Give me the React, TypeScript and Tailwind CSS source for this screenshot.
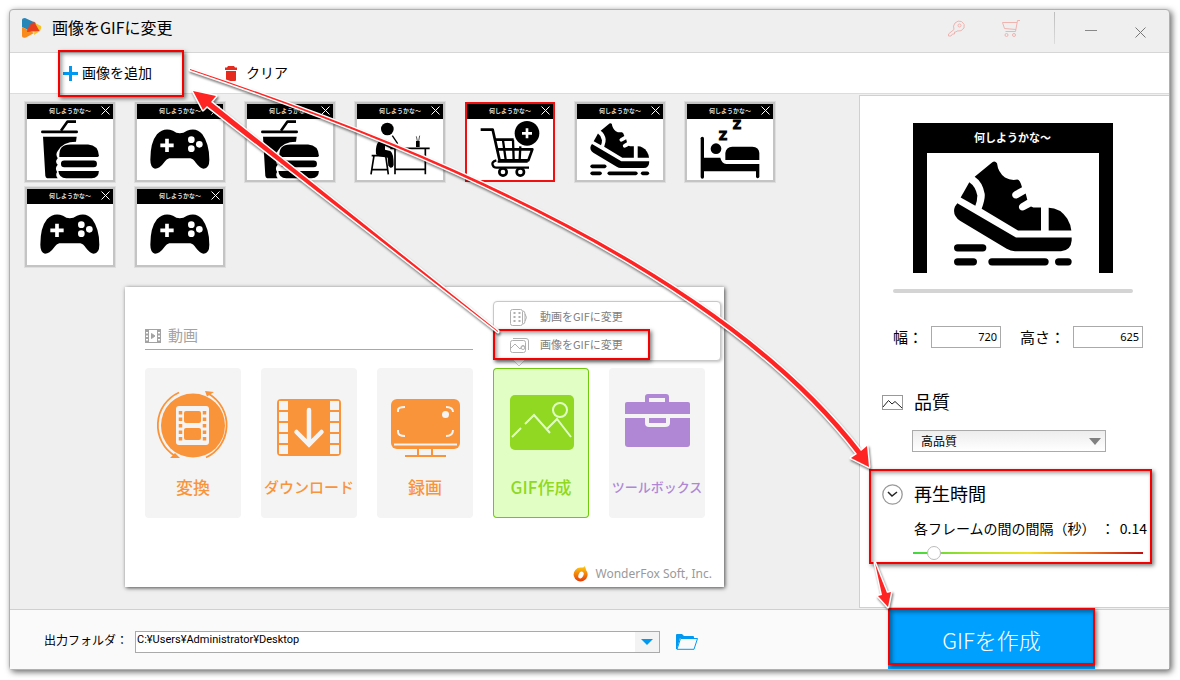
import { useState, type ReactNode } from 'react';

type ThumbKind = 'meal' | 'game' | 'desk' | 'cart' | 'shoe' | 'bed';

const thumbs: ThumbKind[] = ['meal', 'game', 'meal', 'desk', 'cart', 'shoe', 'bed', 'game', 'game'];

function ShoeShape() {
  return (
    <>
      <path d="M344 199 L397 155 Q405 150 411 158 Q414 185 435 201 Q452 211 472 207 Q480 208 486 230 L463 243 Q452 250 459 260 Q465 267 475 262 L497 249 L502 268 L482 280 Q473 288 479 296 Q486 303 496 297 L513 288 L520 291 H543 V360 H474 L365 295 Q376 265 374 250 Q368 215 344 199Z" />
      <path d="M328 215 Q347 228 352 255 Q352 270 346 286 L302 261Z" />
      <path d="M566 292 Q600 292 622 325 Q632 342 634 360 H566Z" />
      <path d="M292 278 L468 381 H635 V390 Q633 420 603 422 H465 Q452 422 440 415 L300 331 Q275 312 285 288Z" />
      <rect x="282" y="401" width="97" height="22" rx="11" />
      <rect x="282" y="443" width="69" height="22" rx="11" />
      <rect x="385" y="443" width="181" height="22" rx="11" />
      <rect x="585" y="443" width="50" height="22" rx="11" />
    </>
  );
}

function ThumbArt({ kind }: { kind: ThumbKind }) {
  return (
    <svg viewBox="0 0 258 183" className="block w-full overflow-visible" aria-hidden="true">
      {kind === 'meal' && (
        <g transform="translate(2 0) scale(0.98)">
          <path d="M148 8 H122 L102 36" fill="none" stroke="#000" strokeWidth="8" strokeLinejoin="round" />
          <rect x="41" y="35" width="113" height="9" rx="4" />
          <path d="M47 54 H150 L148 70 Q108 70 92 98 Q84 108 92 120 Q82 130 92 140 Q82 150 90 162 Q84 172 92 181 H60 Q55 181 54 174Z" />
          <path d="M97 116 Q94 78 130 78 H185 Q216 80 218 112 Q218 116 214 116Z" />
          <rect x="102" y="127" width="110" height="21" rx="10" />
          <path d="M94 159 H218 Q218 181 196 181 H118 Q96 181 94 159Z" />
        </g>
      )}
      {kind === 'game' && (
        <>
          <path d="M40 122 Q40 70 60 46 Q80 24 108 35 Q128 50 150 35 Q178 24 196 46 Q217 75 217 122 Q217 148 200 149 Q190 149 177 132 Q168 119 160 118 H97 Q90 119 80 132 Q68 149 54 149 Q40 146 40 122Z" />
          <path d="M90 59 V99 M70 79 H110" stroke="#fff" strokeWidth="11" />
          <circle cx="163" cy="62" r="10" fill="#fff" />
          <circle cx="187" cy="76" r="10" fill="#fff" />
          <circle cx="163" cy="89" r="10" fill="#fff" />
        </>
      )}
      {kind === 'desk' && (
        <>
          <circle cx="91" cy="30" r="19" />
          <path d="M57 106 Q54 66 76 62 Q92 60 112 76 L132 82 V88 H100 L84 80 L84 92 L100 96 Q110 102 110 138 Q108 148 100 146 L94 140 L92 116 L66 112Z" />
          <g fill="none" stroke="#000" strokeWidth="5">
            <path d="M44 110 H96 M51 110 L42 166 M86 110 L94 166 M46 152 H92" />
            <path d="M100 88 H218 M114 88 V166 M205 88 V166 M114 151 H205" />
            <path d="M106 50 L122 74" strokeWidth="4" />
            <path d="M181 66 L178 52 M185 66 L188 50" strokeWidth="2" />
          </g>
          <rect x="177" y="66" width="11" height="18" />
        </>
      )}
      {kind === 'cart' && (
        <>
          <g fill="none" stroke="#000" strokeWidth="8" strokeLinejoin="round">
            <path d="M41 32 H77 L98 125 M83 62 H140 M89 91 H196 L184 124 H97" />
            <path d="M108 64 L116 122 M138 62 L140 122 M160 82 L158 122 M88 124 Q72 128 78 140 Q80 146 88 146 H186 M92 128 H182" strokeWidth="7" />
            <circle cx="108" cy="159" r="11" />
            <circle cx="160" cy="159" r="11" />
          </g>
          <circle cx="180" cy="43" r="37" />
          <path d="M180 28 V58 M165 43 H195" stroke="#fff" strokeWidth="8" />
        </>
      )}
      {kind === 'shoe' && (
        <g transform="translate(-101 -64) scale(0.5)">
          <ShoeShape />
        </g>
      )}
      {kind === 'bed' && (
        <>
          <rect x="41" y="53" width="10" height="126" rx="5" />
          <path d="M50 116 H100 Q104 134 118 135 H217 V174 Q212 182 207 174 V157 H50Z" />
          <circle cx="87" cy="89" r="16" />
          <path d="M115 123 V102 Q117 84 136 83 H196 Q216 84 217 102 V123Z" />
          <g className="font-['DejaVu_Sans'] font-bold" fontSize="35" stroke="#000" strokeWidth="3">
            <text x="95" y="62">Z</text>
            <text x="137" y="31">Z</text>
          </g>
        </>
      )}
    </svg>
  );
}

function Thumb({ kind, selected, onSelect }: { kind: ThumbKind; selected: boolean; onSelect: () => void }) {
  return (
    <li
      className={
        selected
          ? 'relative w-[90px] border-2 border-[#f01010] bg-white'
          : 'relative w-[90px] border-2 border-[#c4c4c4] bg-white outline outline-[#dedede]'
      }
    >
      <button type="button" onClick={onSelect} className="block w-full">
        <span className="block h-[15px] bg-black text-center text-[6px] leading-[14px] font-bold text-[#ddd]">
          何しようかな～
        </span>
        <ThumbArt kind={kind} />
      </button>
      <button type="button" aria-label="削除" className="absolute top-[2px] right-[3px]">
        <svg width="9" height="9" viewBox="0 0 9 9" className="block" stroke="#fff" strokeWidth="1">
          <path d="M0.5 0.5 L8.5 8.5 M8.5 0.5 L0.5 8.5" />
        </svg>
      </button>
    </li>
  );
}

function Highlight({ className }: { className: string }) {
  return (
    <span
      className={`pointer-events-none absolute border-2 border-[#f40000] shadow-[2px_2px_4px_rgba(0,0,0,0.5),inset_2px_2px_4px_rgba(0,0,0,0.4)] ${className}`}
    />
  );
}

function Card({ label, className, children }: { label: string; className: string; children: ReactNode }) {
  return (
    <button type="button" className={`flex h-[150px] w-24 flex-col items-center rounded-sm pt-[22px] ${className}`}>
      <svg width="76" height="70" viewBox="0 0 76 70" aria-hidden="true">
        {children}
      </svg>
      <span className="mt-3 leading-[30px] font-medium whitespace-nowrap">{label}</span>
    </button>
  );
}

function Launcher() {
  return (
    <section className="absolute top-[193px] left-[115px] w-[599px] bg-white shadow-[1px_1px_4px_rgba(0,0,0,0.7)]">
      <h2 className="mt-[38px] ml-5 flex h-[25px] w-[328px] items-center gap-[7px] border-b border-[#f9943b] pb-[3px] text-[15px] text-[#a3a3a3]">
        <svg width="16" height="14" viewBox="0 0 16 14" fill="none" stroke="#a3a3a3">
          <rect x="0.5" y="0.5" width="15" height="13" />
          <path d="M3.5 0 V14 M12.5 0 V14" />
          <path d="M2 1 V13 M14 1 V13" strokeWidth="2" strokeDasharray="2 1.5" />
          <path d="M6.5 4.5 L10 7 L6.5 9.5Z" fill="#a3a3a3" />
        </svg>
        動画
      </h2>
      <div className="mt-[18px] ml-5 flex gap-5">
        <Card label="変換" className="bg-[#f4f4f4] text-[17px] text-[#f9943b]">
          <circle cx="38" cy="35.500" r="32" fill="#f9943b" />
          <g fill="none" stroke="#f9943b" strokeWidth="1.8">
            <path d="M24 2.500 A36 36 0 0 0 20 66" />
            <path d="M54 4 A36 36 0 0 1 51 67.500" />
          </g>
          <path d="M50 1 L59 2 L52 6.500Z M15 68 H25 L20 63Z" fill="#f9943b" />
          <rect x="21" y="16" width="33" height="39" rx="3" fill="#f4f4f4" />
          <rect x="29" y="21" width="17" height="12" rx="2" fill="#f9943b" />
          <rect x="29" y="38" width="17" height="12" rx="2" fill="#f9943b" />
          <path d="M25.500 21 V51 M49.500 21 V51" stroke="#f9943b" strokeWidth="3.500" strokeDasharray="3.500 3" />
        </Card>
        <Card label="ダウンロード" className="bg-[#f4f4f4] text-[15px] text-[#f9943b]">
          <rect x="6" y="9" width="64" height="57" rx="4" fill="#f9943b" />
          <path d="M12.500 11 V65 M63.500 11 V65" stroke="#f4f4f4" strokeWidth="9" strokeDasharray="9 2" />
          <path d="M38 20 V53 M25.500 42 L38 54.500 L50.500 42" fill="none" stroke="#f4f4f4" strokeWidth="4.500" strokeLinecap="round" />
        </Card>
        <Card label="録画" className="bg-[#f4f4f4] text-[17px] text-[#f9943b]">
          <rect x="4" y="9" width="69" height="50" rx="6" fill="#f9943b" />
          <g fill="none" stroke="#f4f4f4" strokeWidth="2">
            <path d="M7 54.500 H70" />
            <path d="M11 22 V20 Q11 17 18 17 M59 17 Q66 17 66 22 M11 40 V42 Q11 46 18 46 M59 46 Q66 46 66 40" />
          </g>
          <circle cx="58.500" cy="24.500" r="3.500" fill="#f4f4f4" />
          <path d="M18 66 H59 M31 59 V66 M45 59 V66" stroke="#f9943b" strokeWidth="2" />
        </Card>
        <Card label="GIF作成" className="bg-[#e1ffc4] text-[17px] text-[#90d822] inset-ring inset-ring-[#6fca0c]">
          <rect x="7" y="5" width="64" height="55" rx="5" fill="#90d822" />
          <g fill="none" stroke="#e1ffc4" strokeWidth="2">
            <circle cx="57" cy="20" r="7" />
            <path d="M9 47 L18 38 M22 34 L31 25 L47 43 M44 39 L54 29 L68 47" />
          </g>
        </Card>
        <Card label="ツールボックス" className="bg-[#f4f4f4] text-[13px] text-[#af87d4]">
          <path d="M6 14 Q6 12 8 12 H26 V7 Q26 4 29 4 H47 Q50 4 50 7 V12 H69 Q71 12 71 14 V24 H6Z" fill="#af87d4" />
          <rect x="30" y="8" width="16" height="4" fill="#f4f4f4" />
          <path d="M6 28 H71 V54 Q71 57 68 57 H9 Q6 57 6 54Z" fill="#af87d4" />
          <path d="M28 28 V33 Q28 35 30 35 H46 Q49 35 49 33 V28" fill="none" stroke="#f4f4f4" strokeWidth="4" />
        </Card>
      </div>
      <p className="mt-[46px] flex items-center justify-end gap-[7px] pr-3 pb-[3px] font-['Noto_Sans'] text-xs leading-5 text-[#999]">
        <svg width="15" height="16" viewBox="0 0 15 16">
          <defs>
            <linearGradient id="flame" x1="0" y1="0" x2="0" y2="1">
              <stop offset="0" stopColor="#ffcf10" />
              <stop offset="1" stopColor="#e63a08" />
            </linearGradient>
          </defs>
          <path d="M11.500 0 Q13 2 13 4 A7 7 0 1 1 8 1.500 Q11 2 11.500 0Z" fill="url(#flame)" />
          <ellipse cx="8" cy="9" rx="2.400" ry="3.600" transform="rotate(25 8 9)" fill="#fff" />
        </svg>
        WonderFox Soft, Inc.
      </p>

      <div className="absolute top-[14px] right-[3px] w-[228px] rounded-sm border border-[#c8c8c8] bg-white py-px text-[11px] text-[#808080] shadow-[1px_1px_3px_rgba(0,0,0,0.25)]">
        <button type="button" className="flex h-7 w-full items-center gap-[11px] pl-4">
          <svg width="19" height="17" viewBox="0 0 19 17" fill="none" stroke="#b0b0b0">
            <rect x="0.500" y="0.500" width="12" height="16" rx="2" />
            <path d="M13 2 Q15 2 15 5 V12 Q15 15 13 15 M15 5 Q18 8.500 15 12" />
            <path d="M4.500 3 V15 M9.500 3 V15" strokeWidth="2" strokeDasharray="2 2" />
          </svg>
          <span className="pb-0.5">動画をGIFに変更</span>
        </button>
        <button type="button" className="flex h-7 w-full items-center gap-[11px] pl-4">
          <svg width="19" height="15" viewBox="0 0 19 15" fill="none" stroke="#b0b0b0">
            <rect x="0.500" y="2.500" width="15" height="12" rx="2" />
            <path d="M3 0.500 H16 Q18.500 0.500 18.500 3 V12 M1 10 L5 6 L10 11 L13 7.500 L16 11" />
            <circle cx="13" cy="9.500" r="2" />
          </svg>
          <span className="pb-0.5">画像をGIFに変更</span>
        </button>
        <svg width="14" height="7" viewBox="0 0 14 7" className="absolute top-full left-[18px]">
          <path d="M1 0 L7 6 L13 0" fill="#fff" stroke="#c8c8c8" />
        </svg>
        <Highlight className="top-[27px] -left-px h-[31px] w-[157px]" />
      </div>
    </section>
  );
}

function Settings() {
  const [width, setWidth] = useState('720');
  const [height, setHeight] = useState('625');
  const [delay, setDelay] = useState(0.14);

  return (
    <aside className="mt-px mb-px w-[310px] shrink-0 border border-r-0 border-[#d0d0d0] bg-white pt-[27px] pr-[26px] pl-[22px]">
      <div className="mx-auto flex h-[150px] w-[200px] flex-col bg-black px-[14px]">
        <p className="text-center text-[11px] leading-7 font-bold text-white">何しようかな～</p>
        <div className="mt-0.5 flex flex-1 justify-center bg-white">
          <svg width="118" height="105" viewBox="282 152 354 314" className="mt-2" aria-hidden="true">
            <ShoeShape />
          </svg>
        </div>
      </div>
      <div className="mx-auto mt-4 h-1 w-60 rounded-full bg-[#d4d4d4]" />

      <div className="mt-[33px] flex items-center pl-[11px] text-[15px]">
        <label htmlFor="gif-width">幅：</label>
        <input
          id="gif-width"
          value={width}
          onChange={(e) => setWidth(e.target.value)}
          className="ml-2 h-[22px] w-[70px] border border-[#aaa] px-[3px] pb-0.5 text-right font-['Noto_Sans'] text-[11px]"
        />
        <label htmlFor="gif-height" className="ml-[19px] whitespace-nowrap">高さ：</label>
        <input
          id="gif-height"
          value={height}
          onChange={(e) => setHeight(e.target.value)}
          className="ml-2 h-[22px] w-[70px] border border-[#aaa] px-[3px] pb-0.5 text-right font-['Noto_Sans'] text-[11px]"
        />
      </div>

      <div className="mt-10 flex h-7 items-center gap-[11px]">
        <svg width="21" height="15" viewBox="0 0 21 15" fill="none">
          <rect x="0.500" y="0.500" width="20" height="14" stroke="#999" />
          <path d="M1 12 L6.500 5.500 L10 9 L13 6.500 L20 13" stroke="#222" />
        </svg>
        <label htmlFor="quality" className="pb-1 text-lg leading-6">品質</label>
      </div>
      <div className="relative mt-[13px] ml-[30px] w-[194px]">
        <select
          id="quality"
          className="block h-[22px] w-full appearance-none border border-[#aaa] bg-linear-to-b from-[#ededed] to-white pl-2 text-xs"
        >
          <option>高品質</option>
        </select>
        <svg width="12" height="7" viewBox="0 0 12 7" className="pointer-events-none absolute top-2 right-[5px]">
          <path d="M0 0 H12 L6 7Z" fill="#808080" />
        </svg>
      </div>

      <div className="relative mt-[29px]">
        <div className="flex h-7 items-center gap-[11px]">
          <svg width="21" height="21" viewBox="0 0 21 21" fill="none">
            <circle cx="10.500" cy="10.500" r="9.700" stroke="#999" strokeWidth="1.300" />
            <path d="M6 8 L10 12 L15 8" stroke="#222" strokeWidth="1.500" />
          </svg>
          <h3 className="pb-1 text-lg leading-6">再生時間</h3>
        </div>
        <label htmlFor="delay" className="mt-[5px] -mr-1 ml-8 flex justify-between text-sm leading-7 whitespace-nowrap">
          <span>各フレームの間の間隔（秒）</span>
          <span>：</span>
          <span>{delay}</span>
        </label>
        <input
          id="delay"
          type="range"
          min="0.02"
          max="1.9"
          step="0.01"
          value={delay}
          onChange={(e) => setDelay(Number(e.target.value))}
          className="mt-[3px] ml-[31px] block h-4 w-[230px] appearance-none bg-[linear-gradient(90deg,#3fd83f,#a8e02a,#f0e020,#f08020,#c01010)] bg-[length:100%_2px] bg-center bg-no-repeat [&::-webkit-slider-thumb]:h-[14px] [&::-webkit-slider-thumb]:w-[14px] [&::-webkit-slider-thumb]:appearance-none [&::-webkit-slider-thumb]:rounded-full [&::-webkit-slider-thumb]:border [&::-webkit-slider-thumb]:border-[#bbb] [&::-webkit-slider-thumb]:bg-white"
        />
        <Highlight className="-top-3 -right-[9px] -bottom-[3px] -left-[13px]" />
      </div>
    </aside>
  );
}

function Arrows() {
  return (
    <svg width="1180" height="680" viewBox="0 0 1180 680" className="pointer-events-none absolute top-0 left-0" aria-hidden="true">
      <g
        fill="#ff2424"
        stroke="#fff"
        strokeWidth="3"
        strokeLinejoin="round"
        paintOrder="stroke"
        className="drop-shadow-[1px_2px_1px_rgba(0,0,0,0.5)]"
      >
        <path d="M190 69 Q697 237 861 451 L867 446 L869 467 L851 458 L857 454 Q694 240 190 70Z" />
        <path d="M498 331 L211 102 L216 96 L193 91 L203 110 L207 106 L498 332Z" />
        <path d="M875 563 L887 593 L891 592 L888 607 L878 596 L882 595Z" />
      </g>
    </svg>
  );
}

export default function App() {
  const [selected, setSelected] = useState(4);
  const [folder, setFolder] = useState('C:¥Users¥Administrator¥Desktop');

  return (
    <div className="relative flex min-h-screen bg-white pt-[9px] pr-[10px] pb-[10px] pl-[9px] font-['Noto_Sans_CJK_JP','Noto_Sans',sans-serif] text-black">
      <div className="flex min-w-0 flex-1 flex-col rounded-sm border border-[#b0b0b0] bg-[#efefef] shadow-[2px_2px_6px_rgba(0,0,0,0.6)]">
        <header className="flex h-[43px] items-center border-b border-[#d6d6d6] pr-[23px] pb-[6px] pl-3">
          <svg width="20" height="20" viewBox="0 0 20 20" aria-hidden="true">
            <path d="M13 5 L19 8 Q20 10 18 13 L12 17Z" fill="#f5c22a" />
            <path d="M0 2 Q0 0 3 0 L14 5 L6 12 L0 9Z" fill="#2686b8" />
            <path d="M0 9 L8 13 L12 15 L4 19.500 Q0 20.500 0 18Z" fill="#f98a1c" />
            <path d="M12 3.500 L17.500 13 L5 14 Q5 8 12 3.500Z" fill="#e8401c" />
          </svg>
          <h1 className="ml-[10px] pb-[3px] text-base">画像をGIFに変更</h1>
          <div className="ml-auto flex items-center">
            <button type="button" aria-label="登録">
              <svg width="17" height="17" viewBox="0 0 17 17" fill="none" stroke="#efb3b0" className="block">
                <path d="M6 9.500 Q4.500 6 7 3 Q10 0 13.500 1.500 Q17.500 4 16 8 Q13.500 12 9 11 L8 12 H6.500 V14 H4.500 L3 16 H0.500 V14Z" />
                <circle cx="11.500" cy="5.500" r="1.500" />
              </svg>
            </button>
            <button type="button" aria-label="購入" className="ml-[37px]">
              <svg width="18" height="17" viewBox="0 0 18 17" fill="none" stroke="#efb3b0" className="block">
                <path d="M18 0.500 H15.500 L13.500 11.500 H3.500 M15 2.500 H0.500 L2.500 8.500 L14 9.500" />
                <circle cx="4.500" cy="15" r="1.500" />
                <circle cx="12" cy="15" r="1.500" />
              </svg>
            </button>
            <span className="ml-[34px] h-8 w-px bg-linear-to-b from-[#bdbdbd] to-[#dcdcdc]" />
            <button type="button" aria-label="最小化" className="ml-[30px] flex h-8 w-3 items-center pt-1">
              <span className="h-px w-full bg-[#888]" />
            </button>
            <button type="button" aria-label="閉じる" className="ml-[38px] pt-2">
              <svg width="11" height="11" viewBox="0 0 11 11" stroke="#777" className="block">
                <path d="M0.500 0.500 L10.500 10.500 M10.500 0.500 L0.500 10.500" />
              </svg>
            </button>
          </div>
        </header>

        <div className="flex h-[41px] items-center border-b border-[#dcdcdc] bg-white pl-[53px] text-sm">
          <button type="button" className="relative flex items-center gap-1">
            <svg width="15" height="15" viewBox="0 0 15 15" stroke="#0099f2" strokeWidth="3">
              <path d="M7.500 0 V15 M0 7.500 H15" />
            </svg>
            <span className="pb-[3px]">画像を追加</span>
            <Highlight className="-top-3 -right-8 -bottom-3 -left-[5px]" />
          </button>
          <button type="button" className="ml-[73px] flex items-center gap-[9px]">
            <svg width="12" height="15" viewBox="0 0 12 15" fill="#e52a20">
              <path d="M3 0 H9 L10 1.500 H12 V4 H0 V1.500 H2Z M1 5 H11 V14 Q11 15 10 15 H2 Q1 15 1 14Z" />
            </svg>
            <span className="pb-[3px]">クリア</span>
          </button>
        </div>

        <main className="relative flex flex-1">
          <ul className="flex flex-1 flex-wrap content-start gap-x-5 gap-y-[5px] pt-2 pl-[15px]">
            {thumbs.map((kind, i) => (
              <Thumb key={i} kind={kind} selected={i === selected} onSelect={() => setSelected(i)} />
            ))}
          </ul>
          <Launcher />
          <Settings />
        </main>

        <footer className="flex h-[60px] items-center border-t border-[#d0d0d0] bg-[#fafafa] pr-[74px] pl-[34px]">
          <label htmlFor="folder" className="text-xs">出力フォルダ：</label>
          <div className="ml-[7px] mt-1 flex h-[22px] w-[525px] border border-[#aaa] bg-white">
            <input
              id="folder"
              value={folder}
              onChange={(e) => setFolder(e.target.value)}
              className="min-w-0 flex-1 px-px pb-[3px] font-[Roboto,'Noto_Sans',sans-serif] text-[11px]"
            />
            <button type="button" aria-label="履歴" className="flex w-6 items-center justify-center bg-[#f3f3f3]">
              <svg width="12" height="6" viewBox="0 0 12 6">
                <path d="M0 0 H12 L6 6Z" fill="#0099f2" />
              </svg>
            </button>
          </div>
          <button type="button" aria-label="フォルダを開く" className="mt-1 ml-4">
            <svg width="22" height="16" viewBox="0 0 22 16" fill="none" stroke="#0099f2" className="block">
              <path d="M0 15 V1 Q0 0 1 0 H6 L8 2 H17 Q18 2 18 3 V4 H4 L1 15Z" fill="#0099f2" stroke="none" />
              <path d="M4.500 4.500 H21.500 L18 15.300 H1Z" fill="#fafafa" />
            </svg>
          </button>
          <button type="button" className="relative ml-auto h-full w-[207px] bg-[#00a0ff] text-[22px] font-light text-white">
            GIFを作成
            <Highlight className="-top-0.5 right-0 bottom-1 left-0" />
          </button>
        </footer>
      </div>
      <Arrows />
    </div>
  );
}
